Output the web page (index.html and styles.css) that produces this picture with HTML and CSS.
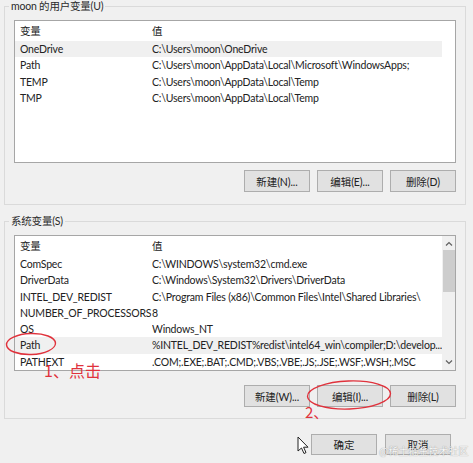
FILE: index.html
```html
<!DOCTYPE html>
<html lang="zh">
<head>
<meta charset="utf-8">
<link rel="stylesheet" href="styles.css">
</head>
<body>
<div class="dlg">
  <fieldset class="group g1">
    <legend>moon 的用户变量(U)</legend>
    <div class="list l1">
      <div class="rows">
        <div class="row head"><span class="c1">变量</span><span class="c2">值</span></div>
        <div class="row sel"><span class="c1">OneDrive</span><span class="c2">C:\Users\moon\OneDrive</span></div>
        <div class="row"><span class="c1">Path</span><span class="c2">C:\Users\moon\AppData\Local\Microsoft\WindowsApps;</span></div>
        <div class="row"><span class="c1">TEMP</span><span class="c2">C:\Users\moon\AppData\Local\Temp</span></div>
        <div class="row"><span class="c1">TMP</span><span class="c2">C:\Users\moon\AppData\Local\Temp</span></div>
      </div>
    </div>
    <div class="btns">
      <button class="btn">新建(N)...</button>
      <button class="btn">编辑(E)...</button>
      <button class="btn">删除(D)</button>
    </div>
  </fieldset>

  <fieldset class="group g2">
    <legend>系统变量(S)</legend>
    <div class="list l2">
      <div class="rows">
        <div class="row head"><span class="c1">变量</span><span class="c2">值</span></div>
        <div class="row"><span class="c1">ComSpec</span><span class="c2">C:\WINDOWS\system32\cmd.exe</span></div>
        <div class="row"><span class="c1">DriverData</span><span class="c2">C:\Windows\System32\Drivers\DriverData</span></div>
        <div class="row"><span class="c1">INTEL_DEV_REDIST</span><span class="c2">C:\Program Files (x86)\Common Files\Intel\Shared Libraries\</span></div>
        <div class="row"><span class="c1">NUMBER_OF_PROCESSORS</span><span class="c2">8</span></div>
        <div class="row"><span class="c1">OS</span><span class="c2">Windows_NT</span></div>
        <div class="row sel"><span class="c1">Path</span><span class="c2">%INTEL_DEV_REDIST%redist\intel64_win\compiler;D:\develop...</span></div>
        <div class="row"><span class="c1">PATHEXT</span><span class="c2">.COM;.EXE;.BAT;.CMD;.VBS;.VBE;.JS;.JSE;.WSF;.WSH;.MSC</span></div>
      </div>
      <div class="sbar">
        <svg class="arr" width="14" height="10" viewBox="0 0 14 10"><path d="M4 6.5 L7 3.5 L10 6.5" fill="none" stroke="#606060" stroke-width="1.2"/></svg>
        <div class="thumb"></div>
        <div class="track"></div>
        <svg class="arr" width="14" height="10" viewBox="0 0 14 10"><path d="M4 3.5 L7 6.5 L10 3.5" fill="none" stroke="#606060" stroke-width="1.2"/></svg>
      </div>
    </div>
    <div class="btns btns2">
      <button class="btn">新建(W)...</button>
      <button class="btn">编辑(I)...</button>
      <button class="btn">删除(L)</button>
    </div>
  </fieldset>

  <div class="okrow">
    <button class="btn">确定</button>
    <button class="btn">取消</button>
  </div>

  <svg class="ov ell1" width="52" height="26" viewBox="0 0 52 26"><ellipse cx="26" cy="13" rx="24.5" ry="10.5" fill="none" stroke="#e0323c" stroke-width="1.4" transform="rotate(-2 26 13)"/></svg>
  <div class="ov note1">1、点击</div>
  <svg class="ov ell2" width="88" height="32" viewBox="0 0 88 32"><ellipse cx="44" cy="16" rx="41.5" ry="14" fill="none" stroke="#e0323c" stroke-width="1.4" transform="rotate(-2 44 16)"/></svg>
  <div class="ov note2">2、</div>
  <svg class="ov cursor" width="14" height="20" viewBox="0 0 14 20"><path d="M1 1 L1 15 L4.5 12 L7 17.5 L9 16.6 L6.6 11.2 L11 11.2 Z" fill="#fff" stroke="#222" stroke-width="1" stroke-linejoin="round"/></svg>
  <div class="ov mark">@稀土掘金技术社区</div>
</div>
</body>
</html>
```

FILE: styles.css
```css
* { box-sizing: border-box; }
html, body {
  margin: 0;
  padding: 0;
  background: #f0f0f0;
}
body {
  width: 473px;
  height: 463px;
  overflow: hidden;
  font-family: Lato, "Noto Sans CJK SC", sans-serif;
  font-size: 10.5px;
  letter-spacing: -0.2px;
  color: #222;
}
.dlg {
  position: relative;
  width: 473px;
  height: 463px;
}
.group {
  margin: 0 0 0 4px;
  width: 462px;
  border: 1px solid #dadada;
  padding: 8px 8px 12px 9px;
}
.g2 { margin-top: 9px; padding-top: 7px; padding-bottom: 11px; }
.group legend {
  font-size: 10.5px;
  line-height: 12px;
  height: 12px;
  padding: 0 2px;
  margin-left: -5px;
  color: #2a2a2a;
}
.g2 legend { line-height: 14px; height: 14px; }
.list {
  width: 442px;
  background: #fff;
  border: 1px solid #a6a6a6;
  display: flex;
  overflow: hidden;
}
.l1 { height: 143px; }
.l2 { height: 136px; }
.rows {
  width: 427px;
  flex: none;
}
.row {
  display: flex;
  height: 16.3px;
  line-height: 16.3px;
  white-space: nowrap;
}
.row.head {
  height: 20px;
  line-height: 20px;
}
.row.sel { background: #f0f0f0; }
.c1 {
  width: 137px;
  padding-left: 5px;
  flex: none;
}
.c2 {
  flex: 1;
  overflow: hidden;
}
.sbar {
  width: 13px;
  margin-left: auto;
  background: #f0f0f0;
  display: flex;
  flex-direction: column;
  align-items: center;
}
.arr { flex: none; margin-top: 3px; }
.sbar .arr:last-child { margin-top: 0; margin-bottom: 3px; }
.thumb {
  width: 12px;
  height: 42px;
  background: #cdcdcd;
  margin-top: 1px;
}
.track { flex: 1; }
.btns {
  display: flex;
  justify-content: flex-end;
  gap: 7px;
  margin-top: 7px;
  padding-right: 1px;
}
.btns2 { margin-top: 14px; }
.btn {
  width: 66px;
  height: 22px;
  background: #e1e1e1;
  border: 1px solid #adadad;
  font-family: Lato, "Noto Sans CJK SC", sans-serif;
  font-size: 10.5px;
  letter-spacing: -0.1px;
  color: #222;
  padding: 0;
}
.okrow {
  display: flex;
  justify-content: flex-end;
  gap: 8px;
  margin-top: 15px;
  padding-right: 22px;
}
.okrow .btn { height: 21px; }
.ov { position: absolute; letter-spacing: 0; }
.ell1 { left: 5px; top: 331px; }
.ell2 { left: 305px; top: 379px; }
.note1 {
  left: 44px;
  top: 360px;
  font-family: "Noto Sans CJK SC", sans-serif;
  font-size: 16px;
  line-height: 20px;
  color: #e0323c;
}
.note2 {
  left: 305px;
  top: 403px;
  font-family: "Noto Sans CJK SC", sans-serif;
  font-size: 15px;
  line-height: 18px;
  color: #e0323c;
}
.cursor { left: 297px; top: 436px; }
.mark {
  left: 379px;
  top: 444px;
  font-family: "Noto Sans CJK SC", sans-serif;
  font-size: 10px;
  line-height: 14px;
  color: #f6f6f6;
  text-shadow: 0 0 1px rgba(0,0,0,0.45);
}
```
